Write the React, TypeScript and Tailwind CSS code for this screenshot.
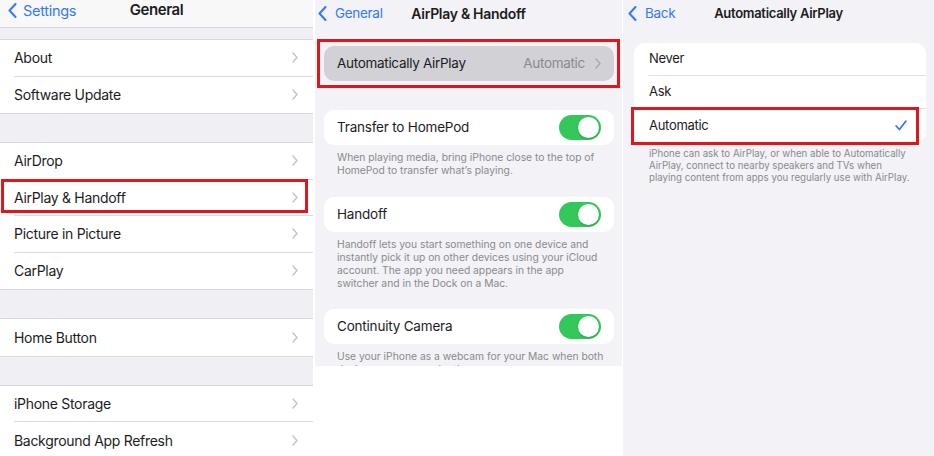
import type { ReactNode } from "react";

const font = { fontFamily: "Inter, 'Liberation Sans', sans-serif" };

function BackChevron() {
  return (
    <svg width="9" height="15" viewBox="0 0 9 15" fill="none" aria-hidden="true">
      <path d="M7.5 1 L1.5 7.5 L7.5 14" stroke="#3478f6" strokeWidth="2" strokeLinecap="round" strokeLinejoin="round" />
    </svg>
  );
}

function RowChevron({ color = "#c4c4c7" }: { color?: string }) {
  return (
    <svg width="6" height="11" viewBox="0 0 6 11" fill="none" aria-hidden="true">
      <path d="M1 1 L5 5.5 L1 10" stroke={color} strokeWidth="1.4" strokeLinecap="round" strokeLinejoin="round" />
    </svg>
  );
}

function Toggle() {
  return (
    <div className="flex h-[25px] w-[42px] items-center justify-end rounded-full bg-[#34c759] p-[2px]">
      <div className="h-[21px] w-[21px] rounded-full bg-white shadow-[0_1px_2px_rgba(0,0,0,0.2)]" />
    </div>
  );
}

function SettingsRow({ label, last, marked }: { label: string; last?: boolean; marked?: boolean }) {
  return (
    <div className="relative pl-[14px]">
      <div
        className={`flex h-[36.5px] items-center justify-between pr-[15px] ${
          last ? "" : "border-b border-[#dcdce0]"
        }`}
      >
        <span className="text-[14px] tracking-[-0.3px] text-[#1c1c1e]">{label}</span>
        <RowChevron />
      </div>
      {marked ? (
        <div className="absolute top-[-1px] right-[5px] bottom-[3px] left-[1px] border-[3px] border-[#e0161d]" />
      ) : null}
    </div>
  );
}

function Group({ children }: { children: ReactNode }) {
  return <div className="border-y border-[#d8d8dc] bg-white">{children}</div>;
}

function GeneralPanel() {
  return (
    <div className="flex h-[456px] w-[313px] shrink-0 flex-col overflow-hidden bg-[#efeff4]">
      <div className="grid h-[28px] shrink-0 grid-cols-[1fr_auto_1fr] items-start border-b border-[#d6d6da] bg-[#f8f8f8] leading-[20px]">
        <div className="flex items-center gap-[6px] pt-[3px] pl-[8px]">
          <BackChevron />
          <span className="text-[14.5px] leading-[15px] tracking-[-0.3px] text-[#3478f6]">Settings</span>
        </div>
        <span className="text-[15px] font-semibold tracking-[-0.4px] text-[#1c1c1e]">General</span>
        <div />
      </div>
      <div className="mt-[11px] flex flex-col gap-[28px]">
        <Group>
          <SettingsRow label="About" />
          <SettingsRow label="Software Update" last />
        </Group>
        <Group>
          <SettingsRow label="AirDrop" />
          <SettingsRow label="AirPlay & Handoff" marked />
          <SettingsRow label="Picture in Picture" />
          <SettingsRow label="CarPlay" last />
        </Group>
        <Group>
          <SettingsRow label="Home Button" last />
        </Group>
        <Group>
          <SettingsRow label="iPhone Storage" />
          <SettingsRow label="Background App Refresh" last />
        </Group>
      </div>
    </div>
  );
}

function ToggleCard({ label }: { label: string }) {
  return (
    <div className="mr-[8px] ml-[9px] flex h-[35px] items-center justify-between rounded-[10px] bg-white pr-[13px] pl-[13px]">
      <span className="text-[13.5px] tracking-[-0.2px] text-[#1c1c1e]">{label}</span>
      <Toggle />
    </div>
  );
}

function Footer({ lines }: { lines: string[] }) {
  return (
    <div className="pt-[6px] pl-[22px] text-[10.3px] leading-[13px] text-[#8a8a8e]">
      {lines.map((line) => (
        <div key={line} className="whitespace-nowrap">
          {line}
        </div>
      ))}
    </div>
  );
}

function HandoffPanel() {
  return (
    <div className="ml-[2px] h-[366px] w-[307px] shrink-0 overflow-hidden bg-[#f2f2f7]">
      <div className="grid h-[27px] grid-cols-[1fr_auto_1fr] items-center">
        <div className="flex items-center gap-[8px] pl-[3px]">
          <BackChevron />
          <span className="text-[13.5px] tracking-[-0.3px] text-[#3478f6]">General</span>
        </div>
        <span className="text-[14px] font-semibold tracking-[-0.3px] text-[#1c1c1e]">AirPlay &amp; Handoff</span>
        <div />
      </div>

      <div className="mx-[2px] mt-[12px] border-[3px] border-[#e0161d] pt-[4px] pr-[3px] pb-[4px] pl-[4px]">
        <div className="flex h-[35px] items-center justify-between rounded-[10px] bg-[#d1d1d6] pr-[13px] pl-[13px]">
          <span className="text-[13.5px] tracking-[-0.3px] text-[#1c1c1e]">Automatically AirPlay</span>
          <div className="flex items-center gap-[10px]">
            <span className="text-[13.5px] tracking-[-0.3px] text-[#8a8a8e]">Automatic</span>
            <RowChevron color="#a9a9ae" />
          </div>
        </div>
      </div>

      <div className="mt-[22px]">
        <ToggleCard label="Transfer to HomePod" />
        <Footer
          lines={[
            "When playing media, bring iPhone close to the top of",
            "HomePod to transfer what\u2019s playing.",
          ]}
        />
      </div>

      <div className="mt-[20px]">
        <ToggleCard label="Handoff" />
        <Footer
          lines={[
            "Handoff lets you start something on one device and",
            "instantly pick it up on other devices using your iCloud",
            "account. The app you need appears in the app",
            "switcher and in the Dock on a Mac.",
          ]}
        />
      </div>

      <div className="mt-[19px]">
        <ToggleCard label="Continuity Camera" />
        <Footer
          lines={[
            "Use your iPhone as a webcam for your Mac when both",
            "devices are near each other.",
          ]}
        />
      </div>
    </div>
  );
}

function OptionRow({ label, last, checked }: { label: string; last?: boolean; checked?: boolean }) {
  return (
    <div className="relative pl-[15px]">
      <div
        className={`flex h-[33px] items-center justify-between pr-[19px] ${
          last ? "" : "border-b border-[#e0e0e4]"
        }`}
      >
        <span className="text-[13px] tracking-[-0.3px] text-[#1c1c1e]">{label}</span>
        {checked ? (
          <svg width="12" height="11" viewBox="0 0 12 11" fill="none" aria-hidden="true">
            <path d="M1.2 6 L4.4 9.5 L10.8 1.2" stroke="#3478f6" strokeWidth="1.8" strokeLinecap="round" strokeLinejoin="round" />
          </svg>
        ) : null}
      </div>
      {checked ? (
        <div className="absolute top-[-2px] right-[7px] bottom-[-3px] left-[-3px] border-[3px] border-[#e0161d]" />
      ) : null}
    </div>
  );
}

function AutoAirPlayPanel() {
  return (
    <div className="ml-[1px] h-[456px] w-[311px] shrink-0 bg-[#f2f2f7]">
      <div className="grid h-[27px] grid-cols-[1fr_auto_1fr] items-center">
        <div className="flex items-center gap-[8px] pl-[5px]">
          <BackChevron />
          <span className="text-[13.5px] tracking-[-0.3px] text-[#3478f6]">Back</span>
        </div>
        <span className="text-[13px] font-semibold tracking-[-0.3px] text-[#1c1c1e]">Automatically AirPlay</span>
        <div />
      </div>

      <div className="mt-[16px] mr-[8px] ml-[11px] rounded-[10px] bg-white">
        <OptionRow label="Never" />
        <OptionRow label="Ask" />
        <OptionRow label="Automatic" last checked />
      </div>

      <div className="pt-[6px] pl-[26px] text-[9.7px] leading-[12px] text-[#8a8a8e]">
        <div className="whitespace-nowrap">iPhone can ask to AirPlay, or when able to Automatically</div>
        <div className="whitespace-nowrap">AirPlay, connect to nearby speakers and TVs when</div>
        <div className="whitespace-nowrap">playing content from apps you regularly use with AirPlay.</div>
      </div>
    </div>
  );
}

export default function App() {
  return (
    <div className="flex h-[456px] w-[934px] overflow-hidden bg-white" style={font}>
      <GeneralPanel />
      <HandoffPanel />
      <AutoAirPlayPanel />
    </div>
  );
}
